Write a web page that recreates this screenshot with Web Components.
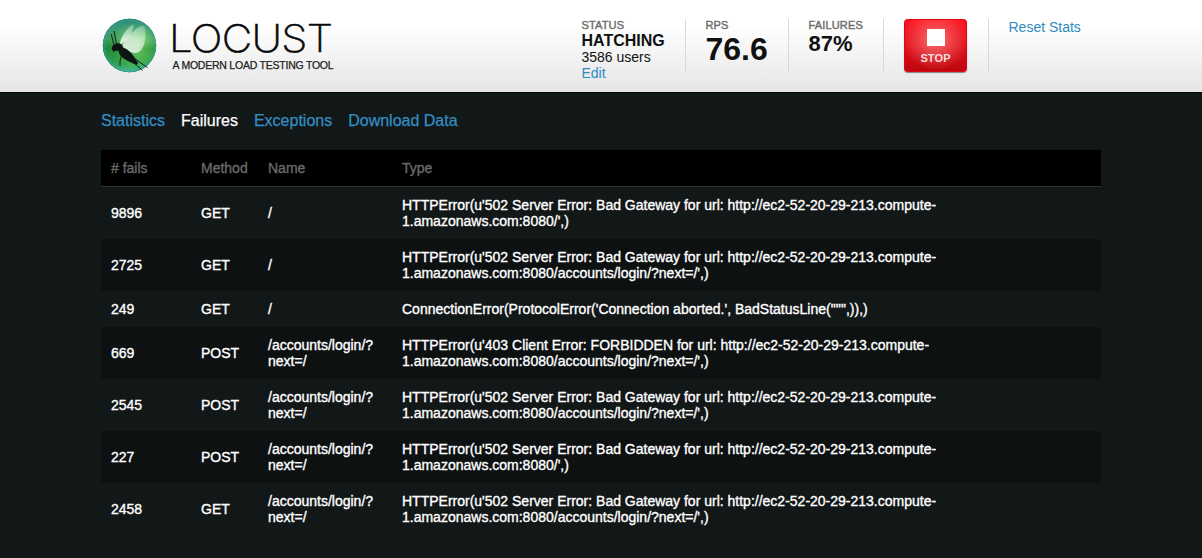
<!DOCTYPE html>
<html lang="en">
<head>
<meta charset="utf-8">
<title>Locust</title>
<style>
html,body{margin:0;height:100%}
body{background:#121717;font-family:"Liberation Sans",Arial,sans-serif;font-size:14px;line-height:16px;color:#fff;overflow:hidden}
</style>
</head>
<body>
<locust-app></locust-app>
<script>
const define = (name, html, init) => customElements.define(name, class extends HTMLElement {
  constructor() {
    super();
    this.attachShadow({ mode: 'open' }).innerHTML = html;
  }
  connectedCallback() { if (init) init(this, this.shadowRoot); }
});

define('locust-logo', `
<style>
:host{display:flex;height:60px;color:#080808}
svg{display:block;flex:none}
.name{font:200 37.800px/44px Inter,sans-serif;margin:-1px 0 0 10.500px;white-space:nowrap;letter-spacing:-.6px;width:144px;transform:scaleX(1.11);transform-origin:0 0;-webkit-text-stroke:.5px #080808}
.tag{font-size:10.500px;line-height:13px;margin:-1px 0 0 14.500px;white-space:nowrap;color:#222;-webkit-text-stroke:.25px #222;letter-spacing:-.23px}
</style>
<svg width="57" height="60" viewBox="101 17 57 60">
  <defs>
    <radialGradient id="ball" gradientUnits="userSpaceOnUse" cx="137" cy="46" r="35">
      <stop offset="0" stop-color="#b4ecaa"/><stop offset=".3" stop-color="#6ac562"/>
      <stop offset=".65" stop-color="#349c48"/><stop offset="1" stop-color="#1f8752"/>
    </radialGradient>
    <linearGradient id="shade" x1="0" y1="0" x2="0" y2="1">
      <stop offset="0" stop-color="#1d7f86" stop-opacity=".8"/><stop offset=".35" stop-color="#7cc5a0" stop-opacity=".25"/>
      <stop offset=".55" stop-color="#0b7a1c" stop-opacity=".4"/><stop offset=".8" stop-color="#35ad4a" stop-opacity=".3"/>
      <stop offset="1" stop-color="#55d0b8" stop-opacity=".8"/>
    </linearGradient>
    <radialGradient id="rim"><stop offset=".84" stop-color="#2f9c86" stop-opacity="0"/><stop offset=".96" stop-color="#3aa898" stop-opacity=".5"/><stop offset="1" stop-color="#226f66" stop-opacity=".8"/></radialGradient>
    <linearGradient id="wing" x1=".8" y1="0" x2=".2" y2="1"><stop offset="0" stop-color="#fff" stop-opacity=".3"/><stop offset="1" stop-color="#fff" stop-opacity=".85"/></linearGradient>
  </defs>
  <circle cx="129.500" cy="45.500" r="26.700" fill="url(#ball)"/>
  <circle cx="129.500" cy="45.500" r="26.700" fill="url(#shade)"/>
  <circle cx="129.500" cy="45.500" r="26.700" fill="url(#rim)"/>
  <path d="M120 44.500C119.500 39 127 28 132 24.800c3-1 2 3 0 7-3 6-7 11-12 12.700z" fill="url(#wing)"/>
  <path d="M121 47.500c4-7.500 13-18.500 20-21.500 4-1.500 5 3 4.500 10-.5 9-4 16.500-10 17-5 0-10-4-14.500-5.500z" fill="url(#wing)"/>
  <path d="M111.800 48.800c-.3-1.500.7-3.500 2.400-4.400 1.400-.8 2.300-1.300 4-1.200 2.300.1 3.500.9 4.300 2.400l.6 2c4.800 1.600 10.200 6.700 15 15.700l-1.600 1.600c-5-1.700-10.600-4.300-14.700-7.800-2.100-2-3-4.200-3.400-6.600l-3.400.2-1.600 1.200z" fill="#0d1611"/>
  <path d="M114 45Q112 38 111.300 34M116.500 44Q115 37 114 31M120 51Q122 54 121.200 57Q119.500 60 120 66M133 57.500L147.500 67.500M129 58.500L142.500 70.500" fill="none" stroke="#10201a" stroke-width="1"/>
</svg>
<div><div class="name">LOCUST</div><div class="tag">A MODERN LOAD TESTING TOOL</div></div>`);

define('stat-box', `
<style>
:host{display:block;box-sizing:border-box;height:53px;padding-left:19.500px;border-left:1px solid #d9d9d9;color:#111}
:host([first]){border-left:0;padding-left:.5px}
.label{font-size:11px;line-height:13px;color:#707070;-webkit-text-stroke:.45px #707070;letter-spacing:.15px}
</style><div class="label"></div><slot></slot>`,
(el, r) => {
  const label = r.querySelector('.label');
  if (el.hasAttribute('label')) label.textContent = el.getAttribute('label'); else label.remove();
});

define('stop-button', `
<style>
:host{display:flex;box-sizing:border-box;width:63px;height:53px;flex-direction:column;align-items:center;border-radius:4px;margin-left:.5px;
background:radial-gradient(ellipse 34px 30px at 50% 40%,rgba(255,150,150,.7),rgba(255,90,90,0)),linear-gradient(#fd1620,#e00c18 50%,#bd0710);
box-shadow:inset 0 0 0 1px #dc0812,0 1px 1px rgba(0,0,0,.45)}
i{width:18px;height:17px;margin-top:10px;background:#fff}
b{font-size:11px;line-height:12px;margin-top:6px;color:#f9dede;letter-spacing:.1px}
</style><i></i><b>STOP</b>`);

define('app-header', `
<style>
:host{display:block;box-sizing:border-box;height:93px;background:linear-gradient(#fff 0,#fff 25px,#e5e5e5 92px);border-bottom:1px solid #000}
.in{width:1000px;margin:0 auto;display:flex;justify-content:space-between}
locust-logo{margin-top:17px}
.stats{display:grid;grid-template-columns:104px 103px 95px 105px 113px;margin-top:19px}
.state{font-size:16px;line-height:17px;font-weight:bold}
.users{line-height:17px}
a{color:#2e8bc0}
.edit{line-height:15px;display:block}
.rps{font-size:32px;line-height:35px;font-weight:bold}
.fail{font-size:22px;line-height:24px;font-weight:bold}
.reset{line-height:17px}
</style>
<div class="in">
  <locust-logo></locust-logo>
  <div class="stats">
    <stat-box first label="STATUS"><div class="state">HATCHING</div><div class="users">3586 users</div><a class="edit">Edit</a></stat-box>
    <stat-box label="RPS"><div class="rps">76.6</div></stat-box>
    <stat-box label="FAILURES"><div class="fail">87%</div></stat-box>
    <stat-box><stop-button></stop-button></stat-box>
    <stat-box><a class="reset">Reset Stats</a></stat-box>
  </div>
</div>`);

define('tab-link', `
<style>:host{display:block;font-size:16px;line-height:18px;color:#338ec3;-webkit-text-stroke:.25px currentColor}:host([active]){color:#fff}</style><slot></slot>`);

define('fail-row', `
<style>
:host{display:grid;grid-template-columns:90px 67px 134px 1fr;align-items:center;-webkit-text-stroke:.35px currentColor}
:host([alt]){background:#0d1112}
:host([head]){background:#000;color:#6a6a6a;border-bottom:1px solid #2d3232}
span{padding:10px;white-space:pre-line}
</style>`,
(el, r) => {
  for (const cell of el.cells) {
    const span = document.createElement('span');
    span.textContent = cell;
    r.append(span);
  }
});

define('fail-table', `<style>:host{display:block;width:1000px}</style>`, (el, r) => {
  const login = '/accounts/login/?\nnext=/';
  const host = 'http://ec2-52-20-29-213.compute-\n1.amazonaws.com:8080/';
  const bad = "HTTPError(u'502 Server Error: Bad Gateway for url: " + host;
  const rows = [
    ['# fails', 'Method', 'Name', 'Type'],
    ['9896', 'GET', '/', bad + "',)"],
    ['2725', 'GET', '/', bad + "accounts/login/?next=/',)"],
    ['249', 'GET', '/', `ConnectionError(ProtocolError('Connection aborted.', BadStatusLine("''",)),)`],
    ['669', 'POST', login, "HTTPError(u'403 Client Error: FORBIDDEN for url: " + host + "accounts/login/?next=/',)"],
    ['2545', 'POST', login, bad + "accounts/login/?next=/',)"],
    ['227', 'POST', login, bad + "',)"],
    ['2458', 'GET', login, bad + "accounts/login/?next=/',)"]
  ];
  rows.forEach((cells, i) => {
    const row = document.createElement('fail-row');
    row.cells = cells;
    if (i === 0) row.setAttribute('head', '');
    else if (i % 2 === 0) row.setAttribute('alt', '');
    r.append(row);
  });
});

define('locust-app', `
<style>
:host{display:block}
main{width:1000px;margin:0 auto}
nav{display:flex;gap:16px;padding-top:19px;margin-bottom:20px}
</style>
<app-header></app-header>
<main>
  <nav><tab-link>Statistics</tab-link><tab-link active>Failures</tab-link><tab-link>Exceptions</tab-link><tab-link>Download Data</tab-link></nav>
  <fail-table></fail-table>
</main>`);
</script>
</body>
</html>
